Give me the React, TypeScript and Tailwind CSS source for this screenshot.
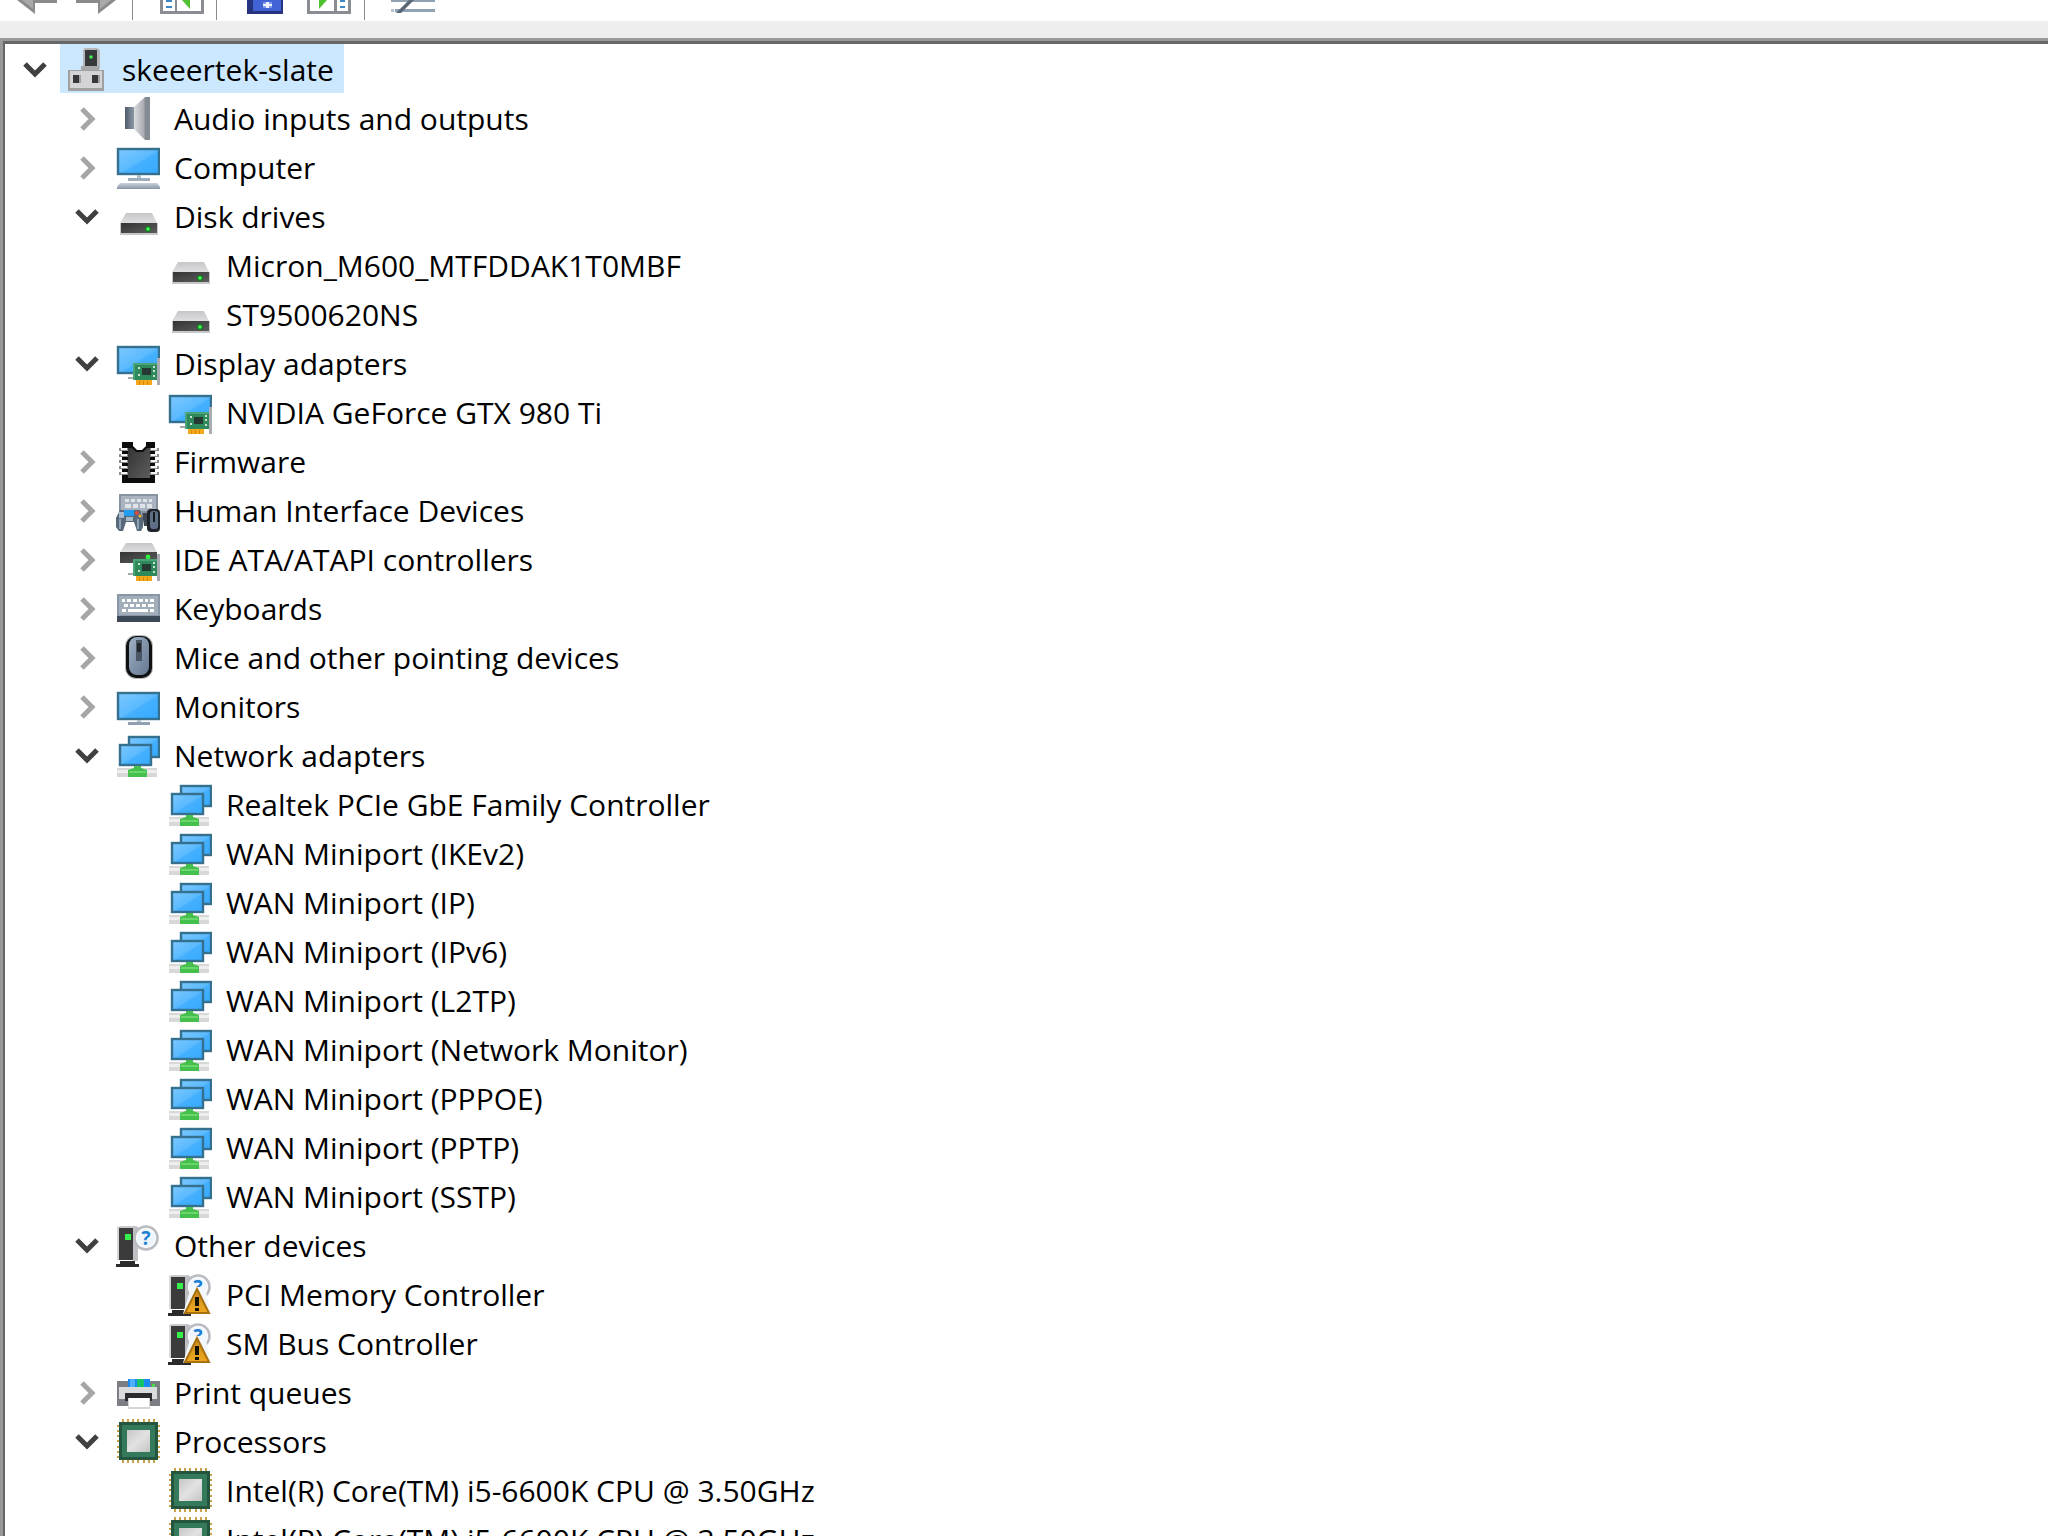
import { useState, type ReactNode } from "react";

type IconName =
  | "root" | "audio" | "computer" | "disk" | "display" | "firmware" | "hid" | "ide"
  | "keyboard" | "mouse" | "monitor" | "network" | "other" | "warning" | "printer" | "cpu";

type Device = { label: string; icon: IconName; open?: boolean; children?: Device[] };

const group = (icon: IconName, labels: string[]): Device[] => labels.map((label) => ({ label, icon }));

const categories: Device[] = [
  { label: "Audio inputs and outputs", icon: "audio", children: [] },
  { label: "Computer", icon: "computer", children: [] },
  { label: "Disk drives", icon: "disk", open: true, children: group("disk", ["Micron_M600_MTFDDAK1T0MBF", "ST9500620NS"]) },
  { label: "Display adapters", icon: "display", open: true, children: group("display", ["NVIDIA GeForce GTX 980 Ti"]) },
  { label: "Firmware", icon: "firmware", children: [] },
  { label: "Human Interface Devices", icon: "hid", children: [] },
  { label: "IDE ATA/ATAPI controllers", icon: "ide", children: [] },
  { label: "Keyboards", icon: "keyboard", children: [] },
  { label: "Mice and other pointing devices", icon: "mouse", children: [] },
  { label: "Monitors", icon: "monitor", children: [] },
  {
    label: "Network adapters",
    icon: "network",
    open: true,
    children: group("network", [
      "Realtek PCIe GbE Family Controller",
      "WAN Miniport (IKEv2)",
      "WAN Miniport (IP)",
      "WAN Miniport (IPv6)",
      "WAN Miniport (L2TP)",
      "WAN Miniport (Network Monitor)",
      "WAN Miniport (PPPOE)",
      "WAN Miniport (PPTP)",
      "WAN Miniport (SSTP)",
    ]),
  },
  { label: "Other devices", icon: "other", open: true, children: group("warning", ["PCI Memory Controller", "SM Bus Controller"]) },
  { label: "Print queues", icon: "printer", children: [] },
  {
    label: "Processors",
    icon: "cpu",
    open: true,
    children: group("cpu", ["Intel(R) Core(TM) i5-6600K CPU @ 3.50GHz", "Intel(R) Core(TM) i5-6600K CPU @ 3.50GHz"]),
  },
];

const tree: Device = { label: "skeeertek-slate", icon: "root", open: true, children: categories };

// gradients shared by all the device icons
function Gradients() {
  return (
    <svg width="0" height="0" className="absolute" aria-hidden="true">
      <defs>
        <linearGradient id="screen" x1="0" y1="0" x2="1" y2="1">
          <stop offset="0" stopColor="#7cc8ff" />
          <stop offset="0.5" stopColor="#5bbaff" />
          <stop offset="0.55" stopColor="#45b0ff" />
          <stop offset="1" stopColor="#35aaff" />
        </linearGradient>
        <linearGradient id="silver" x1="0" y1="0" x2="0" y2="1">
          <stop offset="0" stopColor="#c6c7ca" />
          <stop offset="1" stopColor="#dededf" />
        </linearGradient>
        <linearGradient id="cone" x1="0" y1="0" x2="1" y2="0">
          <stop offset="0" stopColor="#d9dbde" />
          <stop offset="0.6" stopColor="#a9adb3" />
          <stop offset="0.75" stopColor="#7e848c" />
          <stop offset="1" stopColor="#9aa0a8" />
        </linearGradient>
        <linearGradient id="magnet" x1="0" y1="0" x2="1" y2="0">
          <stop offset="0" stopColor="#4f5b68" />
          <stop offset="1" stopColor="#8d99a6" />
        </linearGradient>
        <linearGradient id="dark" x1="0" y1="0" x2="1" y2="1">
          <stop offset="0" stopColor="#343434" />
          <stop offset="1" stopColor="#5c5c5c" />
        </linearGradient>
        <linearGradient id="steel" x1="0" y1="0" x2="1" y2="1">
          <stop offset="0" stopColor="#9fb0c4" />
          <stop offset="1" stopColor="#64778f" />
        </linearGradient>
        <linearGradient id="base" x1="0" y1="0" x2="0" y2="1">
          <stop offset="0" stopColor="#c9d2dc" />
          <stop offset="1" stopColor="#8796a8" />
        </linearGradient>
        <linearGradient id="die" x1="0" y1="0" x2="1" y2="1">
          <stop offset="0" stopColor="#c6c6c6" />
          <stop offset="0.5" stopColor="#e2e2e2" />
          <stop offset="1" stopColor="#c4c4c4" />
        </linearGradient>
        <linearGradient id="amber" x1="0" y1="0" x2="0" y2="1">
          <stop offset="0" stopColor="#c98a1c" />
          <stop offset="1" stopColor="#f0a821" />
        </linearGradient>
      </defs>
    </svg>
  );
}

function Screen({ x, y, w, h }: { x: number; y: number; w: number; h: number }) {
  return <rect x={x + 1} y={y + 1} width={w - 2} height={h - 2} fill="url(#screen)" stroke="#35718f" strokeWidth="2.4" />;
}

function Card() {
  return (
    <g>
      <path d="M12 36h6v2h-6z" fill="#a5a9ad" />
      <path d="M17 22h25v17H17z" fill="#2f8a5b" />
      <path d="M17 22h25v2H17zM17 22h2v17h-2z" fill="#4ba377" />
      <path d="M26 27h9v7h-9z" fill="#263a33" />
      <path d="M22 26h2v2h-2zM22 33h2v2h-2zM37 25h2v2h-2zM37 34h2v2h-2zM37 29h2v2h-2z" fill="#c9e2d4" />
      <path d="M20 39h16v5H20z" fill="#f4a81c" />
      <path d="M23 40h1v4h-1zM27 40h1v4h-1zM31 40h1v4h-1z" fill="#d98600" />
      <path d="M41 17h3v27h-3z" fill="#a9adb1" />
    </g>
  );
}

function Tower() {
  return (
    <g>
      <path d="M1 4l3-1h17v3L1 6z" fill="#c9cacc" />
      <path d="M17 4h5v34h-5z" fill="#bfc1c4" />
      <path d="M1 5h3v32H1z" fill="#d6d7d9" />
      <path d="M3 5h14v32H3z" fill="#3b3b3c" />
      <path d="M9 11h6v6H9z" fill="#35f04a" />
      <path d="M4 38h15v3h4v3H0v-3h4z" fill="#2b2b2c" />
      <circle cx="30" cy="15" r="11.5" fill="#fff" stroke="#b9bcc0" strokeWidth="2.6" />
      <circle cx="30" cy="15" r="9" fill="#eef6fd" />
      <text x="30" y="22" textAnchor="middle" fontFamily="Open Sans, sans-serif" fontSize="19" fontWeight="700" fill="#1f7fd4">?</text>
    </g>
  );
}

const pinSlots = [6, 11, 16, 21, 27, 32, 37];

const drawings: Record<IconName, ReactNode> = {
  root: (
    <g>
      <path d="M19 3l2-2h12l3 2v19H19z" fill="#b4b6b9" />
      <path d="M21 3h12v17H21z" fill="#37383a" />
      <circle cx="27" cy="10" r="1.8" fill="#3cf050" />
      <path d="M17 19h18v4H17z" fill="#a6a7a9" />
      <path d="M4 23h36v21H4z" fill="#a0a0a3" />
      <path d="M6 24h32v17H6z" fill="#d4d4d6" />
      <path d="M9 28h6v8H9zM28 28h6v8h-6z" fill="#37383a" />
      <path d="M15 28h2v8h-2zM34 28h2v8h-2z" fill="#a0a0a2" />
    </g>
  ),
  audio: (
    <g>
      <path d="M18 11L29 1h5v43h-5L18 33z" fill="url(#cone)" />
      <path d="M29 1h5v43h-5z" fill="#858b93" />
      <path d="M9 11h9v22H9z" fill="url(#magnet)" />
    </g>
  ),
  computer: (
    <g>
      <Screen x={1} y={3} w={43} h={27} />
      <path d="M21 30h4v3h-4z" fill="#b6c0cb" />
      <path d="M12 33h22v3H12z" fill="#9faebd" />
      <path d="M4 38h37l3 4v2H1v-2z" fill="url(#base)" />
    </g>
  ),
  disk: (
    <g>
      <path d="M10 19h26l5 10H4z" fill="url(#silver)" />
      <path d="M4 29h38v12H4z" fill="#c6c7c9" />
      <path d="M5 29h36v10H5z" fill="url(#dark)" />
      <circle cx="32" cy="35" r="3" fill="#157a20" />
      <circle cx="32" cy="35" r="1.7" fill="#45ff55" />
    </g>
  ),
  display: (
    <g>
      <Screen x={1} y={5} w={43} h={28} />
      <Card />
    </g>
  ),
  firmware: (
    <g>
      <path d="M6 3h11v4l4 4h5l4-4V3h9v41H6z" fill="#0c0c0c" />
      <path d="M12 9h4l4 4h7l4-4h3v30H12z" fill="url(#dark)" />
      {[9, 15, 21, 27, 33].map((y) => (
        <g key={y}>
          <path d={`M3 ${y}h9v3H3zM34 ${y}h9v3h-9z`} fill="#8b8d8f" />
          <path d={`M5 ${y}h6v2H5zM35 ${y}h6v2h-6z`} fill="#f4f4f4" />
        </g>
      ))}
    </g>
  ),
  hid: (
    <g>
      <path d="M3 6h39v19H3z" fill="#8793a1" />
      <path d="M5 8h35v15H5z" fill="#a9b4c0" />
      <path d="M9 11h27v9H9z" fill="#dfe4e9" />
      <path d="M13 11h2v3h-2zM19 11h2v3h-2zM25 11h2v3h-2zM31 11h2v3h-2zM9 14h27v2H9zM15 16h2v4h-2zM22 16h2v4h-2zM29 16h2v4h-2z" fill="#a9b4c0" />
      <path d="M4 22h20l3 8v9l-2 4h-4l-3-9h-8l-3 9H3l-3-4v-9z" fill="#57687b" />
      <path d="M3 24h5v6H3z" fill="#a8bacd" />
      <path d="M8 22h10v6H8z" fill="#1f9bf0" />
      <path d="M10 29h7v4h-7z" fill="#a9b8c8" />
      <circle cx="21" cy="25" r="2" fill="#e0493a" />
      <circle cx="24" cy="28" r="1.5" fill="#f5b021" />
      <path d="M3 31h2v10H3zM21 31h2v10h-2z" fill="#8fa2b6" />
      <path d="M26 25h6v13h-4z" fill="#3e4853" />
      <rect x="31" y="21" width="13" height="23" rx="4" fill="#1f242a" />
      <rect x="34" y="23" width="8" height="18" rx="3" fill="#5f7086" />
      <path d="M37 24h2v10h-2z" fill="#15191e" />
    </g>
  ),
  ide: (
    <g>
      <path d="M10 6h26l5 9H4z" fill="url(#silver)" />
      <path d="M4 15h37v11H4z" fill="url(#dark)" />
      <circle cx="32" cy="20" r="2.4" fill="#2df03c" />
      <Card />
    </g>
  ),
  keyboard: (
    <g>
      <path d="M1 8h43v22H1z" fill="#8996a5" />
      <path d="M3 10h39v19H3z" fill="#a3aebb" />
      <path d="M6 13h3v3H6zM11 13h4v3h-4zM17 13h4v3h-4zM23 13h4v3h-4zM29 13h3v3h-3zM34 13h4v3h-4zM8 18h4v3H8zM14 18h4v3h-4zM20 18h4v3h-4zM26 18h4v3h-4zM32 18h6v3h-6zM6 23h4v3H6zM12 23h20v3H12zM34 23h4v3h-4z" fill="#fff" />
      <path d="M1 30h43v6H1z" fill="#3d4957" />
    </g>
  ),
  mouse: (
    <g>
      <rect x="9" y="0" width="28" height="44" rx="11" fill="#b9bcc0" />
      <rect x="10" y="1" width="26" height="42" rx="10" fill="#0e1012" />
      <rect x="13" y="2" width="20" height="38" rx="8" fill="url(#steel)" />
      <path d="M20 5h6v21h-6z" fill="#4b5664" />
      <path d="M21 8h4v9h-4z" fill="#23282e" />
    </g>
  ),
  monitor: (
    <g>
      <Screen x={1} y={8} w={43} h={28} />
      <path d="M21 36h4v2h-4z" fill="#b6c0cb" />
      <path d="M12 38h22v3H12z" fill="#8ea0b2" />
    </g>
  ),
  network: (
    <g>
      <Screen x={12} y={3} w={32} h={22} />
      <Screen x={3} y={11} w={33} h={22} />
      <path d="M1 35h40v9H1z" fill="#d8d8d9" />
      <path d="M1 37h40v3H1z" fill="#eeeeee" />
      <path d="M18 33h7v2l6 2v7H12v-7l6-2z" fill="#45c04c" />
      <path d="M13 38h17v2H13z" fill="#6ad66c" />
    </g>
  ),
  other: <Tower />,
  warning: (
    <g>
      <Tower />
      <path d="M23 15h14l6 27H15z" fill="#f4f7fa" />
      <path d="M29 17L41 41H17z" fill="url(#amber)" stroke="#a8700f" strokeWidth="2" />
      <path d="M27 25h4v9h-4zM27 36h4v3h-4z" fill="#141005" />
    </g>
  ),
  printer: (
    <g>
      <path d="M1 11h43v25H1z" fill="#7b7f84" />
      <path d="M3 17h38v12H3z" fill="#dadbdd" />
      <path d="M12 9h22v8H12z" fill="#1b8af0" />
      <path d="M14 9h5v8h-5z" fill="#4fb0f8" />
      <path d="M21 9h7v8h-7z" fill="#17c26a" />
      <path d="M36 14h3v3h-3z" fill="#3be04a" />
      <path d="M9 23h27v8H9z" fill="#2b2c2e" />
      <path d="M12 28h22v11H12z" fill="#d5d5d5" />
      <path d="M13 28h20v9H13z" fill="#fff" />
    </g>
  ),
  cpu: (
    <g>
      {pinSlots.map((p) => (
        <path key={p} d={`M${p} 0h2v44h-2zM1 ${p}h43v2H1z`} fill="#c9a24a" />
      ))}
      <path d="M3 3h39v38H3z" fill="#23553f" />
      <path d="M6 6h33v32H6z" fill="#347a5a" />
      <path d="M11 11h23v22H11z" fill="url(#die)" />
    </g>
  ),
};

function Chevron({ open }: { open: boolean }) {
  return (
    <svg width="24" height="24" viewBox="0 0 24 24" fill="none" strokeWidth="5">
      {open ? <path d="M2 6l10 10L22 6" stroke="#404040" /> : <path d="M7 2l10 10L7 22" stroke="#a6a6a6" />}
    </svg>
  );
}

const indents = ["pl-[5px]", "pl-[57px]", "pl-[109px]"];

function TreeRow({ device, level }: { device: Device; level: number }) {
  const [open, setOpen] = useState(!!device.open);

  return (
    <li>
      <div className={`flex h-[49px] items-center ${indents[level]}`}>
        {device.children ? (
          <button
            type="button"
            aria-label={`${open ? "Collapse" : "Expand"} ${device.label}`}
            onClick={() => setOpen(!open)}
            className="flex w-[50px] shrink-0 justify-center pt-0.5"
          >
            <Chevron open={open} />
          </button>
        ) : (
          <span className="w-[50px] shrink-0" />
        )}
        <button
          type="button"
          className={`flex h-full items-center gap-[14px] whitespace-nowrap pl-1 pr-[10px] ${level === 0 ? "bg-[#cce8ff]" : ""}`}
        >
          <svg width="44" height="44" viewBox="0 0 44 44" aria-hidden="true">
            {drawings[device.icon]}
          </svg>
          <span className="pt-0.5">{device.label}</span>
        </button>
      </div>
      {open && device.children && device.children.length > 0 && (
        <ul>
          {device.children.map((child, i) => (
            <TreeRow key={i} device={child} level={level + 1} />
          ))}
        </ul>
      )}
    </li>
  );
}

function Toolbar() {
  return (
    <header className="flex h-[21px] shrink-0 items-start overflow-hidden bg-white pl-[17px]">
      <button type="button" aria-label="Back">
        <svg width="40" height="15" viewBox="0 0 40 15">
          <path d="M0 0l18 14V3h22V0z" fill="#8b8b8b" />
          <path d="M5 0l11 9V0z" fill="#a9a9a9" />
        </svg>
      </button>
      <button type="button" aria-label="Forward" className="ml-[19px]">
        <svg width="40" height="15" viewBox="0 0 40 15">
          <path d="M40 0L22 14V3H0V0z" fill="#8b8b8b" />
          <path d="M35 0L24 9V0z" fill="#a9a9a9" />
        </svg>
      </button>
      <span className="ml-4 h-5 w-px bg-[#8c8c8c]" />
      <button type="button" aria-label="Show/Hide Console Tree" className="ml-[27px]">
        <svg width="44" height="15" viewBox="0 0 44 15">
          <path d="M0 0h44v14H0z" fill="#8a8d91" />
          <path d="M3 0h12v11H3zM17 0h24v11H17z" fill="#fff" />
          <path d="M6 0h6v2H6zM6 6h6v2H6z" fill="#3b87c8" />
          <path d="M22 0h8v9z" fill="#4fc02f" />
        </svg>
      </button>
      <span className="ml-3 h-5 w-px bg-[#8c8c8c]" />
      <button type="button" aria-label="Help" className="ml-[30px]">
        <svg width="36" height="15" viewBox="0 0 36 15">
          <path d="M0 0h36v14H0z" fill="#26347f" />
          <path d="M6 0h28v11H6z" fill="#4263d6" />
          <path d="M16 2h9v6h-9z" fill="#7f97ea" />
          <path d="M19 2h3v2h3v2h-3v2h-3V6h-3V4h3z" fill="#eef2ff" />
        </svg>
      </button>
      <button type="button" aria-label="Show/Hide Action Pane" className="ml-6">
        <svg width="44" height="15" viewBox="0 0 44 15">
          <path d="M0 0h44v14H0z" fill="#8a8d91" />
          <path d="M3 0h24v11H3zM30 0h11v11H30z" fill="#fff" />
          <path d="M33 0h5v2h-5zM33 6h5v2h-5z" fill="#3b87c8" />
          <path d="M12 0h8l-8 9z" fill="#4fc02f" />
        </svg>
      </button>
      <span className="ml-[13px] h-5 w-px bg-[#8c8c8c]" />
      <button type="button" aria-label="Scan for hardware changes" className="ml-[26px]">
        <svg width="44" height="15" viewBox="0 0 44 15">
          <path d="M0 0h44v2H0zM4 9h40v3H4z" fill="#8fa2b3" />
          <path d="M0 9h3v3H0z" fill="#b9c5cf" />
          <path d="M18 0h5L10 13H5z" fill="#5a6876" />
        </svg>
      </button>
    </header>
  );
}

export default function App() {
  return (
    <div className="flex h-screen flex-col overflow-hidden bg-[#eeeeee] font-['Segoe_UI','Open_Sans',sans-serif] text-[30px] leading-[47px] text-black">
      <Gradients />
      <Toolbar />
      <main className="mt-[17px] min-h-0 flex-1 border-l-[3px] border-t-[3px] border-[#999999]">
        <div className="h-full overflow-hidden border-l-2 border-t-[3px] border-[#666666] bg-white">
          <ul>
            <TreeRow device={tree} level={0} />
          </ul>
        </div>
      </main>
    </div>
  );
}
